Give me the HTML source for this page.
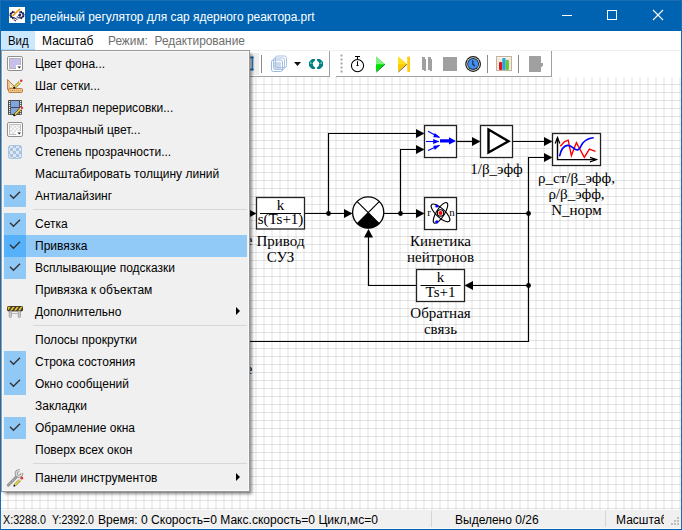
<!DOCTYPE html>
<html><head><meta charset="utf-8">
<style>
*{margin:0;padding:0;box-sizing:border-box}
html,body{width:682px;height:530px;overflow:hidden}
body{position:relative;background:#fff;font-family:"Liberation Sans",sans-serif;font-size:12px;color:#000}
.a{position:absolute;white-space:pre}
#grid{position:absolute;left:1px;top:77px;width:680px;height:433px;
 background-image:
  linear-gradient(to bottom, transparent 0, transparent 4px, rgba(0,0,0,.10) 4px, rgba(0,0,0,.10) 5px, transparent 5px),
  linear-gradient(to right, rgba(0,0,0,.055) 0, rgba(0,0,0,.055) 1px, transparent 1px, transparent 7px, rgba(0,0,0,.055) 7px);
 background-size:8px 8px;background-position:-1px -77px;}
#title{position:absolute;left:0;top:0;width:682px;height:31px;background:#0063b1}
#bl{position:absolute;left:0;top:0;width:1px;height:530px;background:#1a6db3}
#br{position:absolute;right:0;top:0;width:1px;height:530px;background:#1a6db3}
#bt{position:absolute;left:0;top:0;width:682px;height:1px;background:#1a6db3}
#bb{position:absolute;left:0;bottom:0;width:682px;height:1px;background:#0063b1}
#menubar{position:absolute;left:1px;top:31px;width:680px;height:19px;background:#fff;line-height:21px}
#mbline{position:absolute;left:1px;top:50px;width:680px;height:1px;background:#f0f0f0}
#tbarea{position:absolute;left:1px;top:51px;width:680px;height:26px;background:#fff}
#status{position:absolute;left:1px;top:510px;width:680px;height:19px;background:#f0f0f0;line-height:19px;border-bottom:1px solid #f9f9f9}
.lbl{position:absolute;font-family:"Liberation Serif",serif;font-size:15px;line-height:16px;text-align:center;white-space:pre;color:#000}

#menu{position:absolute;left:1px;top:50px;width:249px;height:442px;background:#f0f0f0;border:1px solid #999;
 box-shadow:inset 1px 1px 0 #f9f9f9, inset -1px -1px 0 #f9f9f9, 3px 3px 3px -1px rgba(0,0,0,.45)}
.mt{position:absolute;left:35px;height:22px;line-height:22px;white-space:pre}
.chk{position:absolute;left:4px;width:22px;height:22px;background:#90c8f6}
.sep{position:absolute;left:33px;width:214px;height:1px;background:#d7d7d7}
.ic{position:absolute;left:7px;width:16px;height:16px}
</style></head><body>
<div id="grid"></div>
<svg class="a" style="left:0;top:0" width="682" height="530" viewBox="0 0 682 530">
 <g fill="none" stroke="#000" stroke-width="1.2">
  <!-- wires -->
  <path d="M304 213.5 H345"/>
  <path d="M328.5 213.5 V133.5 H417"/>
  <path d="M384 213.5 H417"/>
  <path d="M400.5 213.5 V149.5 H417"/>
  <path d="M456 141.5 H473"/>
  <path d="M512 141.5 H545"/>
  <path d="M456 213.5 H528.5 V341.5 H240"/>
  <path d="M528.5 213.5 V157.5 H545"/>
  <path d="M528.5 285.5 H471"/>
  <path d="M416 285.5 H368.5 V236"/>
 </g>
 <g fill="#000">
  <circle cx="328.5" cy="213.5" r="2.4"/>
  <circle cx="400.5" cy="213.5" r="2.4"/>
  <circle cx="528.5" cy="213.5" r="2.4"/>
  <circle cx="528.5" cy="285.5" r="2.4"/>
  <!-- arrowheads -->
  <path d="M248 209 L256.5 213.5 L248 218Z"/>
  <path d="M344 209 L352.5 213.5 L344 218Z"/>
  <path d="M416 129 L424.5 133.5 L416 138Z"/>
  <path d="M416 145 L424.5 149.5 L416 154Z"/>
  <path d="M416 209 L424.5 213.5 L416 218Z"/>
  <path d="M472 137 L480.5 141.5 L472 146Z"/>
  <path d="M544 137 L552.5 141.5 L544 146Z"/>
  <path d="M544 153 L552.5 157.5 L544 162Z"/>
  <path d="M473 281 L464.5 285.5 L473 290Z"/>
  <path d="M364 237.5 L368.5 229 L373 237.5Z"/>
 </g>
 <!-- blocks -->
 <g fill="#fff" stroke="#222" stroke-width="1.3">
  <rect x="256.5" y="197.5" width="48" height="31.5"/>
  <rect x="424.5" y="125.5" width="32" height="32"/>
  <rect x="480.5" y="125.5" width="32" height="32"/>
  <rect x="552.5" y="133.5" width="48" height="32"/>
  <rect x="424.5" y="197.5" width="32" height="32"/>
  <rect x="416.5" y="269.5" width="48" height="32"/>
 </g>
 <!-- sum -->
 <circle cx="368.2" cy="212.4" r="15.6" fill="#fff" stroke="#000" stroke-width="1.3"/>
 <path d="M368.2 212.6 L357.2 223.6 A15.6 15.6 0 0 0 379.2 223.6Z" fill="#000"/>
 <path d="M357.2 201.6 L379.2 223.6 M379.2 201.6 L357.2 223.6" stroke="#000" stroke-width="1.2"/>
 <!-- fraction lines -->
 <path d="M260 213.5 H301 M420.5 285.5 H460.5" stroke="#000" stroke-width="1.1"/>
 <!-- mux icon -->
 <g stroke="#0000ff" stroke-width="1.1" fill="none">
  <path d="M428 131.3 L439.5 137.5"/>
  <path d="M426 141.5 H439"/>
  <path d="M428 150.6 L439.5 145.2"/>
 </g>
 <g fill="#0000ff">
  <path d="M434.8 133 L440 137.6 L433.2 137.2Z"/>
  <path d="M433.2 139 L439.2 141.5 L433.2 144Z"/>
  <path d="M434.8 150 L440 145.3 L433.2 145.8Z"/>
  <path d="M440 139.2 H449 V137.3 L456 141 L449 144.4 V142.4 H440Z"/>
 </g>
 <!-- amp triangle -->
 <path d="M488.5 129.5 L508.5 141.3 L488.5 152.5Z" fill="none" stroke="#000" stroke-width="2.4" stroke-linejoin="miter"/>
 <!-- scope icon -->
 <g fill="none" stroke-width="1.4">
  <path d="M557.5 138 V159.6 H596" stroke="#000"/>
  <path d="M555.2 143.4 L557.5 137.6 L559.8 143.4 M590 157.3 L596.4 159.6 L590 161.9" stroke="#000" stroke-width="1.3"/>
  <path d="M560.3 146.3 L564.6 141.6 L568.2 140.2 L571.4 155.6 L576.4 142.7 L584.3 157.4 L589.4 149.2 L595.5 151.3" stroke="#ff0000"/>
  <path d="M559.5 156.3 C561 149 563 146 567.4 145.4 C572 145 574 150 577.5 149.9 C580 150 581 145 583 142.7 C586 139.5 590 138 593.7 137.7" stroke="#0000ff" stroke-width="1.6"/>
 </g>
 <!-- atom -->
 <g fill="none" stroke="#000" stroke-width="1.1">
  <ellipse cx="440.5" cy="212.9" rx="12.2" ry="4.4" transform="rotate(43 440.5 212.9)"/>
  <ellipse cx="440.5" cy="212.9" rx="12" ry="4.1" transform="rotate(-58 440.5 212.9)"/>
  <circle cx="440.5" cy="212.9" r="3.2"/>
 </g>
 <circle cx="440.5" cy="212.9" r="2" fill="#ff0000"/>
 <circle cx="436.8" cy="206" r="1.6" fill="#0000ff"/>
 <circle cx="436.8" cy="221.9" r="1.6" fill="#0000ff"/>
</svg>

<div id="labels">
 <div class="lbl" style="left:270px;top:197px;width:21px">k</div>
 <div class="lbl" style="left:250px;top:211px;width:61px">s(Ts+1)</div>
 <div class="lbl" style="left:250px;top:233px;width:61px">Привод
СУЗ</div>
 <div class="lbl" style="left:430px;top:269px;width:21px">k</div>
 <div class="lbl" style="left:410px;top:284px;width:61px">Ts+1</div>
 <div class="lbl" style="left:396px;top:305px;width:89px">Обратная
связь</div>
 <div class="lbl" style="left:396px;top:233px;width:89px">Кинетика
нейтронов</div>
 <div class="lbl" style="left:456px;top:161px;width:81px">1/β_эфф</div>
 <div class="lbl" style="left:526px;top:170px;width:101px">ρ_ст/β_эфф,
ρ/β_эфф,
N_норм</div>
 <div class="lbl" style="left:424px;top:204px;width:10px;font-size:11px">r</div>
 <div class="lbl" style="left:447px;top:204px;width:10px;font-size:11px">n</div>
 <div class="lbl" style="left:232.5px;top:232px;width:20px;text-align:right">е</div>
 <div class="lbl" style="left:232.5px;top:361px;width:20px;text-align:right">е</div>
</div>


<!-- window chrome -->
<div id="title">
  <svg class="a" style="left:9px;top:7px" width="16" height="16" viewBox="0 0 16 16">
    <rect width="16" height="16" fill="#fff"/>
    <g fill="none" stroke="#1c1850" stroke-width="1.35">
    <path d="M5.78 5.46 A2.8 2.8 0 1 0 5.78 10.54"/>
    <path d="M10.22 5.46 A2.8 2.8 0 1 1 10.22 10.54"/>
    </g>
    <g fill="#1c1850"><rect x="2.84" y="3.63" width="1.3" height="1.3" transform="rotate(-105 3.64 4.43)"/><rect x="0.60" y="5.35" width="1.3" height="1.3" transform="rotate(-150 1.40 6.15)"/><rect x="0.10" y="7.20" width="1.3" height="1.3" transform="rotate(180 0.90 8.00)"/><rect x="0.60" y="9.05" width="1.3" height="1.3" transform="rotate(150 1.40 9.85)"/><rect x="2.84" y="10.77" width="1.3" height="1.3" transform="rotate(105 3.64 11.57)"/><rect x="11.56" y="3.63" width="1.3" height="1.3" transform="rotate(-75 12.36 4.43)"/><rect x="13.80" y="5.35" width="1.3" height="1.3" transform="rotate(-30 14.60 6.15)"/><rect x="14.30" y="7.20" width="1.3" height="1.3" transform="rotate(0 15.10 8.00)"/><rect x="13.80" y="9.05" width="1.3" height="1.3" transform="rotate(30 14.60 9.85)"/><rect x="11.56" y="10.77" width="1.3" height="1.3" transform="rotate(75 12.36 11.57)"/></g>
    <path d="M4.1 8.4 L10.6 2.3" stroke="#f39a12" stroke-width="1.6" stroke-linecap="round"/>
    <path d="M4.8 13.4 L10.2 8 M6 14.2 L11.2 9" stroke="#1c1850" stroke-width="1.1" stroke-dasharray="1.2 0.9"/>
    <circle cx="10.9" cy="7.8" r="1.3" fill="#1c1850"/>
  </svg>
  <div class="a" style="left:30px;top:7.5px;color:#fff;font-size:12px;line-height:18px;transform:scaleX(.993);transform-origin:0 0">релейный регулятор для сар ядерного реактора.prt</div>
  <div class="a" style="left:562px;top:15px;width:10px;height:1px;background:#fff"></div>
  <div class="a" style="left:607px;top:10px;width:10px;height:10px;border:1px solid #fff"></div>
  <svg class="a" style="left:652px;top:9px" width="12" height="12" viewBox="0 0 12 12"><path d="M1 1 L11 11 M11 1 L1 11" stroke="#fff" stroke-width="1.1"/></svg>
</div>

<div id="menubar">
  <div class="a" style="left:0;top:0;width:34px;height:19px;background:#cce8ff;border-bottom:1px solid #a6d5fb"></div>
  <div class="a" style="left:7px;top:0;transform:scaleX(.95);transform-origin:0 0">Вид</div>
  <div class="a" style="left:41px;top:0">Масштаб</div>
  <div class="a" style="left:107px;top:0;color:#6d6d6d;transform:scaleX(.989);transform-origin:0 0">Режим:  Редактирование</div>
</div>
<div id="mbline"></div>
<div id="tbarea"></div>
<svg class="a" style="left:0;top:0" width="682" height="80" viewBox="0 0 682 80">
 <!-- toolbar 1 -->
 <rect x="250" y="53" width="9" height="22" fill="#eeeeee"/>
 <path d="M250 57.5 H252.5 V69.5 H250" fill="none" stroke="#2e7bc4" stroke-width="1.6"/>
 <rect x="251.5" y="56.5" width="2" height="2" fill="#1f5f9f"/>
 <rect x="251.5" y="68.5" width="2" height="2" fill="#1f5f9f"/>
 <rect x="261" y="55" width="1" height="18" fill="#8a8a8a"/>
 <!-- layers icon -->
 <rect x="271.5" y="56" width="15" height="15.5" rx="1" fill="#fff"/>
 <rect x="274" y="62" width="7" height="7" fill="#c9daef"/>
 <g fill="none" stroke-width="1">
 <rect x="275.5" y="56" width="11" height="11.5" rx="1.8" stroke="#a9c3e4"/>
 <rect x="273.5" y="58" width="11" height="11.5" rx="1.8" stroke="#a9c3e4"/>
 <rect x="271.5" y="60" width="11" height="11.5" rx="1.8" stroke="#9dbadf"/>
 </g>
 <path d="M294 62 H301 L297.5 66Z" fill="#111"/>
 <!-- teal brackets -->
 <path d="M315 59 H312 L309 62 V66 L312 69 H315 V67.5 L313 65.5 V62.5 L315 60.5Z" fill="#008080"/>
 <path d="M317 59 H320 L323 62 V66 L320 69 H317 V67.5 L319 65.5 V62.5 L317 60.5Z" fill="#008080"/>
 <path d="M310 63.5 H313 M319 63.5 H322" stroke="#b89c98" stroke-width="0.7"/>
 <rect x="310" y="62" width="1.3" height="1.3" fill="#00ffff"/>
 <rect x="320.7" y="62" width="1.3" height="1.3" fill="#00ffff"/>
 <rect x="329" y="51" width="1" height="26" fill="#a0a0a0"/>
 <rect x="1" y="76" width="329" height="1" fill="#a0a0a0"/>
 <!-- toolbar 2 -->
 <rect x="336" y="76" width="216" height="1" fill="#a0a0a0"/>
 <rect x="551" y="51" width="1" height="26" fill="#a0a0a0"/>
 <g fill="#a8a8a8"><rect x="340.5" y="54.5" width="2" height="2"/><rect x="340.5" y="58.5" width="2" height="2"/><rect x="340.5" y="62.5" width="2" height="2"/><rect x="340.5" y="66.5" width="2" height="2"/><rect x="340.5" y="70.5" width="2" height="2"/></g>
 <!-- stopwatch -->
 <path d="M355 56.5 H360 M357.5 56.5 V59.5" stroke="#000" stroke-width="1.1"/>
 <circle cx="357.5" cy="65.6" r="6.1" fill="#fff" stroke="#000" stroke-width="1.05"/>
 <path d="M357.5 61.2 V65.6" stroke="#000" stroke-width="1"/>
 <path d="M356.5 65.5 H358.5" stroke="#000" stroke-width="1"/>
 <!-- play -->
 <path d="M376 56.5 L385 64.2 L376 72Z" fill="#00e000"/>
 <path d="M376 56.5 L385 64.2 L376 64.2Z" fill="#80f080"/>
 <path d="M385 64.2 L376.5 72" stroke="#063" stroke-width="0.9"/>
 <!-- step -->
 <path d="M398 56.5 L407 64.2 L398 72Z" fill="#ffc800"/>
 <path d="M398 56.5 L407 64.2 L398 64.2Z" fill="#ffe020"/>
 <path d="M407 64.2 L398.5 72" stroke="#654" stroke-width="0.9"/>
 <rect x="407.2" y="56.5" width="2.8" height="15.5" rx="1" fill="#ffcc10"/>
 <!-- pause -->
 <path d="M422 57 H425 V59 H426 V71 H424 V70 H422Z" fill="#a0a0a0"/>
 <path d="M428 57 H431 V59 H432 V71 H430 V70 H428Z" fill="#a0a0a0"/>
 <!-- stop -->
 <rect x="443" y="57" width="14" height="14" fill="#a0a0a0"/>
 <!-- clock -->
 <circle cx="473.1" cy="64" r="7.9" fill="#1a1a1a"/>
 <circle cx="473.1" cy="64" r="6.7" fill="#e4eaf4"/>
 <circle cx="473.1" cy="64" r="5.9" fill="#222"/>
 <circle cx="473.1" cy="64" r="5.1" fill="#3f8ef0"/>
 <path d="M472.8 60.5 V64.2 L474.8 66" fill="none" stroke="#223" stroke-width="1.1"/>
 <rect x="487" y="55" width="1" height="18" fill="#8a8a8a"/>
 <!-- chart -->
 <rect x="496.5" y="56.5" width="15" height="14" fill="#f6f1e6" stroke="#c4b39a"/>
 <path d="M497 59.5 H511 M497 61.5 H511 M497 63.5 H511 M497 65.5 H511 M497 67.5 H511" stroke="#e8dccb" stroke-width="0.8"/>
 <rect x="499" y="62" width="3.3" height="8" rx="1" fill="#e0141e"/>
 <rect x="502.3" y="58" width="3.3" height="12" rx="1" fill="#27a3e4"/>
 <rect x="505.6" y="60" width="3.3" height="10" rx="1" fill="#6cc23a"/>
 <rect x="518" y="55" width="1" height="18" fill="#8a8a8a"/>
 <!-- export -->
 <path d="M529 56 H541 V63 H543 V66 H542 V67 H541 V72 H529Z" fill="#a0a0a0"/>
</svg>


<div id="status">
  <div class="a" style="left:2px;top:1px;transform:scaleX(.895);transform-origin:0 0">X:3288.0</div>
  <div class="a" style="left:51px;top:1px;transform:scaleX(.885);transform-origin:0 0">Y:2392.0</div>
  <div class="a" style="left:97.4px;top:1px;transform:scaleX(1.005);transform-origin:0 0">Время: 0 Скорость=0 Макс.скорость=0 Цикл,мс=0</div>
  <div class="a" style="left:430px;top:1px;width:1px;height:16px;background:#d5d5d5"></div>
  <div class="a" style="left:454px;top:1px">Выделено 0/26</div>
  <div class="a" style="left:604px;top:1px;width:1px;height:16px;background:#d5d5d5"></div>
  <div class="a" style="left:615px;top:1px;width:48px;overflow:hidden">Масштаб</div>
  <svg class="a" style="left:668px;top:5px" width="12" height="12"><g fill="#bdbdbd"><rect x="8" y="2" width="2" height="2"/><rect x="5" y="5" width="2" height="2"/><rect x="8" y="5" width="2" height="2"/><rect x="2" y="8" width="2" height="2"/><rect x="5" y="8" width="2" height="2"/><rect x="8" y="8" width="2" height="2"/></g></svg>
</div>

<div id="bt"></div><div id="bl"></div><div id="br"></div><div id="bb"></div>

<div id="menu"></div>
<div id="menuc">
<div class="mt" style="top:53px">Цвет фона...</div>
<div class="mt" style="top:75px">Шаг сетки...</div>
<div class="mt" style="top:97px">Интервал перерисовки...</div>
<div class="mt" style="top:119px">Прозрачный цвет...</div>
<div class="mt" style="top:141px">Степень прозрачности...</div>
<div class="mt" style="top:163px">Масштабировать толщину линий</div>
<div class="chk" style="top:185px"></div><svg class="a" style="left:4px;top:185px" width="22" height="22"><path d="M6 9.8 L9.5 13.3 L16 6.8" fill="none" stroke="#333" stroke-width="1.4"/></svg>
<div class="mt" style="top:185px">Антиалайзинг</div>
<div class="sep" style="top:209px"></div>
<div class="chk" style="top:213px"></div><svg class="a" style="left:4px;top:213px" width="22" height="22"><path d="M6 9.8 L9.5 13.3 L16 6.8" fill="none" stroke="#333" stroke-width="1.4"/></svg>
<div class="mt" style="top:213px">Сетка</div>
<div class="a" style="left:4px;top:235px;width:243px;height:22px;background:#91c9f7"></div>
<div class="a" style="left:4px;top:235px;width:22px;height:22px;background:#56b0fa"></div>
<svg class="a" style="left:4px;top:235px" width="22" height="22"><path d="M6 9.8 L9.5 13.3 L16 6.8" fill="none" stroke="#333" stroke-width="1.4"/></svg>
<div class="mt" style="top:235px">Привязка</div>
<div class="chk" style="top:257px"></div><svg class="a" style="left:4px;top:257px" width="22" height="22"><path d="M6 9.8 L9.5 13.3 L16 6.8" fill="none" stroke="#333" stroke-width="1.4"/></svg>
<div class="mt" style="top:257px">Всплывающие подсказки</div>
<div class="mt" style="top:279px">Привязка к объектам</div>
<svg class="a" style="left:235px;top:307px" width="6" height="10"><path d="M1 0 L5 4 L1 8Z" fill="#000"/></svg>
<div class="mt" style="top:301px">Дополнительно</div>
<div class="sep" style="top:325px"></div>
<div class="mt" style="top:329px">Полосы прокрутки</div>
<div class="chk" style="top:351px"></div><svg class="a" style="left:4px;top:351px" width="22" height="22"><path d="M6 9.8 L9.5 13.3 L16 6.8" fill="none" stroke="#333" stroke-width="1.4"/></svg>
<div class="mt" style="top:351px">Строка состояния</div>
<div class="chk" style="top:373px"></div><svg class="a" style="left:4px;top:373px" width="22" height="22"><path d="M6 9.8 L9.5 13.3 L16 6.8" fill="none" stroke="#333" stroke-width="1.4"/></svg>
<div class="mt" style="top:373px">Окно сообщений</div>
<div class="mt" style="top:395px">Закладки</div>
<div class="chk" style="top:417px"></div><svg class="a" style="left:4px;top:417px" width="22" height="22"><path d="M6 9.8 L9.5 13.3 L16 6.8" fill="none" stroke="#333" stroke-width="1.4"/></svg>
<div class="mt" style="top:417px">Обрамление окна</div>
<div class="mt" style="top:439px">Поверх всех окон</div>
<div class="sep" style="top:463px"></div>
<svg class="a" style="left:235px;top:473px" width="6" height="10"><path d="M1 0 L5 4 L1 8Z" fill="#000"/></svg>
<div class="mt" style="top:467px">Панели инструментов</div>
<svg class="a" style="left:0;top:0" width="682" height="530" viewBox="0 0 682 530">
 <defs>
  <pattern id="chk4" x="0" y="0" width="4" height="4" patternUnits="userSpaceOnUse"><rect width="4" height="4" fill="#f6f6f6"/><rect width="2" height="2" fill="#e2e2e2"/><rect x="2" y="2" width="2" height="2" fill="#e2e2e2"/></pattern>
  <pattern id="chk5" x="1" y="1" width="6" height="6" patternUnits="userSpaceOnUse"><rect width="6" height="6" fill="#dce8f6"/><rect width="3" height="3" fill="#a9c1dd"/><rect x="3" y="3" width="3" height="3" fill="#a9c1dd"/></pattern>
 </defs>
 <!-- icon1: color -->
 <rect x="7.5" y="56.5" width="15" height="14" rx="1.5" fill="#fff" stroke="#8f8f8f"/>
 <rect x="9.5" y="58.5" width="11" height="10" fill="#c8c0ea" stroke="#b4b4b4"/>
 <rect x="16" y="65" width="5" height="4" fill="#fff"/>
 <path d="M17.5 66.5 L21 66.5 L19.25 68.5Z" fill="#222"/>
 <!-- icon2: ruler + pencil -->
 <path d="M7.5 79.5 L17.5 89.5 L7.5 89.5Z" fill="#f3d3a3" stroke="#b9814a"/>
 <path d="M8.8 82.5 L8.8 88.2 L14.5 88.2" fill="none" stroke="#e0a868" stroke-width="1.2" stroke-dasharray="1 1"/>
 <path d="M10 85 L10 87 L12 87Z" fill="#fff"/>
 <rect x="8.5" y="88.5" width="14" height="4" rx="1" fill="#efc58a" stroke="#b9814a"/>
 <path d="M10 90.5 h1 M12 90.5 h1 M14 90.5 h1 M16 90.5 h1 M18 90.5 h1 M20 90.5 h1" stroke="#c98f50"/>
 <path d="M14.5 87.5 L20 82" stroke="#7a6a20" stroke-width="2.7"/>
 <path d="M14.5 87.5 L20 82" stroke="#f2dc50" stroke-width="1.6"/>
 <path d="M19.8 82.2 L20.8 81.2" stroke="#f4f4f4" stroke-width="2.2"/>
 <circle cx="21.2" cy="80.8" r="1.3" fill="#e8303c"/>
 <circle cx="14.2" cy="87.8" r="1" fill="#000"/>
 <!-- icon3: film + pencil -->
 <rect x="8" y="100" width="14" height="15" rx="1" fill="#4a4a4a"/>
 <rect x="11" y="101" width="8" height="6" fill="#7fa6df"/>
 <rect x="11" y="108" width="8" height="6" fill="#7fa6df"/>
 <rect x="9" y="101" width="1.2" height="1.2" fill="#f0f0f0"/><rect x="20" y="101" width="1.2" height="1.2" fill="#f0f0f0"/><rect x="9" y="103" width="1.2" height="1.2" fill="#f0f0f0"/><rect x="20" y="103" width="1.2" height="1.2" fill="#f0f0f0"/><rect x="9" y="105" width="1.2" height="1.2" fill="#f0f0f0"/><rect x="20" y="105" width="1.2" height="1.2" fill="#f0f0f0"/><rect x="9" y="107" width="1.2" height="1.2" fill="#f0f0f0"/><rect x="20" y="107" width="1.2" height="1.2" fill="#f0f0f0"/><rect x="9" y="109" width="1.2" height="1.2" fill="#f0f0f0"/><rect x="20" y="109" width="1.2" height="1.2" fill="#f0f0f0"/><rect x="9" y="111" width="1.2" height="1.2" fill="#f0f0f0"/><rect x="20" y="111" width="1.2" height="1.2" fill="#f0f0f0"/><rect x="9" y="113" width="1.2" height="1.2" fill="#f0f0f0"/><rect x="20" y="113" width="1.2" height="1.2" fill="#f0f0f0"/>
 <path d="M14.5 115 L20.5 109" stroke="#5a5010" stroke-width="2.8"/>
 <path d="M14.5 115 L20.5 109" stroke="#f0d848" stroke-width="1.6"/>
 <path d="M20.3 109.2 L21.2 108.3" stroke="#fff" stroke-width="2"/>
 <path d="M21 108.5 L22.5 107" stroke="#e83040" stroke-width="2.6"/>
 <circle cx="14.2" cy="115.2" r="1" fill="#000"/>
 <!-- icon4: transparent color -->
 <rect x="7.5" y="122.5" width="15" height="14" rx="1.5" fill="#fff" stroke="#8f8f8f"/>
 <rect x="9.5" y="124.5" width="11" height="10" fill="url(#chk4)" stroke="#c0c0c0"/>
 <rect x="16" y="131" width="5" height="4" fill="#fff"/>
 <path d="M17.5 132.5 L21 132.5 L19.25 134.5Z" fill="#222"/>
 <!-- icon5: transparency degree -->
 <rect x="8.5" y="145.5" width="13" height="13" rx="2" fill="url(#chk5)" stroke="#a7c4e6"/>
 <!-- icon6: barrier -->
 <rect x="7" y="306" width="16" height="5" rx="1" fill="#f2c318"/>
 <clipPath id="barclip"><rect x="7" y="306" width="16" height="5" rx="1"/></clipPath><path clip-path="url(#barclip)" d="M8 312 L13 305 M12 312 L17 305 M16 312 L21 305 M20 312 L25 305" stroke="#3a3f50" stroke-width="1.6"/>
 <rect x="7.5" y="306.5" width="15" height="4.5" rx="1" fill="none" stroke="#2c2c2c" stroke-width="0.8"/>
 <rect x="9.2" y="311" width="2.3" height="6.5" rx="1" fill="#c8c8c8" stroke="#8a8a8a" stroke-width="0.6"/>
 <rect x="18.2" y="311" width="2.3" height="6.5" rx="1" fill="#c8c8c8" stroke="#8a8a8a" stroke-width="0.6"/>
 <path d="M11.5 313.5 H18.2" stroke="#b8b8b8" stroke-width="1"/>
 <!-- icon7: wrench + pencil -->
 <path d="M8.2 485.3 L16.8 476.5" stroke="#8c8c8c" stroke-width="2.8" stroke-linecap="round"/>
 <path d="M8.2 485.3 L16.8 476.5" stroke="#eeeeee" stroke-width="0.9" stroke-dasharray="1 1"/>
 <path d="M21.76 473.01 A2.8 2.8 0 1 1 19.49 470.74" fill="none" stroke="#8c8c8c" stroke-width="3"/>
 <path d="M21.76 473.01 A2.8 2.8 0 1 1 19.49 470.74" fill="none" stroke="#dcdcdc" stroke-width="1.4"/>
 <path d="M14.6 485.4 L20.2 479.8" stroke="#6a6a28" stroke-width="2.6"/>
 <path d="M14.6 485.4 L20.2 479.8" stroke="#f2dc50" stroke-width="1.5"/>
 <path d="M20 480 L21 479" stroke="#f4f4f4" stroke-width="2.2"/>
 <circle cx="21.8" cy="478.2" r="1.4" fill="#e8303c"/>
 <circle cx="14.3" cy="485.7" r="0.9" fill="#000"/>
</svg>
</div>
</body></html>
